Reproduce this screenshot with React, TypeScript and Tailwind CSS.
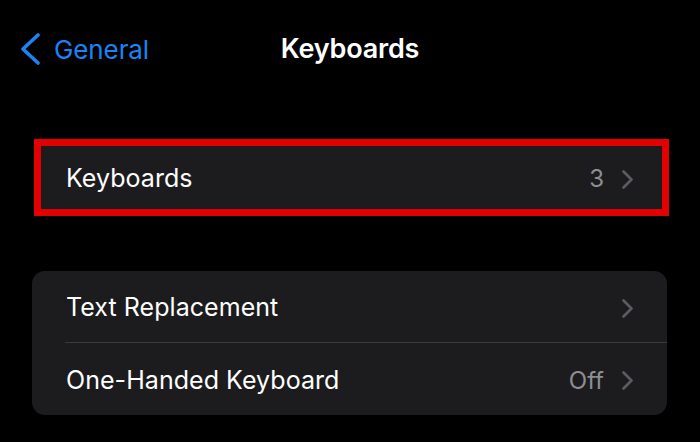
function Chevron() {
	return (
		<svg width="11" height="19" viewBox="0 0 11 19" fill="none" className="shrink-0">
			<path d="M1.5 1.5 L9.5 9.5 L1.5 17.5" stroke="#5b5b60" strokeWidth="2.6" strokeLinecap="round" strokeLinejoin="round" />
		</svg>
	);
}

function Row({ label, value, className }: { label: string; value?: string; className: string }) {
	return (
		<div className={`flex items-center pt-[3px] ${className}`}>
			<span className="flex-1 text-[25px] tracking-[0.05px] text-white">{label}</span>
			{value && <span className="mr-[18px] text-[24px] text-[#8e8e93]">{value}</span>}
			<Chevron />
		</div>
	);
}

export default function App() {
	return (
		<div
			className="h-[442px] w-[700px] overflow-hidden bg-black"
			style={{ fontFamily: 'Inter, "Noto Sans", sans-serif' }}
		>
			{/* Nav bar */}
			<div className="grid h-[98px] grid-cols-[1fr_auto_1fr] items-center">
				<div className="flex items-center pl-[18px] text-[#1a84f7]">
					<svg width="24" height="32" viewBox="0 0 24 32" fill="none" className="mr-[12px]">
						<path d="M20 2 L5 16 L20 30" stroke="#1a84f7" strokeWidth="3.6" strokeLinecap="round" strokeLinejoin="round" />
					</svg>
					<span className="text-[26px] tracking-[-0.1px]">General</span>
				</div>
				<span className="text-[27px] font-semibold tracking-[-0.2px] text-white">Keyboards</span>
				<div />
			</div>

			{/* Keyboards, highlighted */}
			<div className="ml-[34px] mt-[41px] w-[635px] border-[7px] border-[#e20000] bg-[#1c1c1e]">
				<Row label="Keyboards" value="3" className="h-[63px] pl-[25px] pr-[29px]" />
			</div>

			{/* Second group */}
			<div className="ml-[32px] mt-[55px] w-[635px] overflow-hidden rounded-[13px] bg-[#1c1c1e]">
				<Row label="Text Replacement" className="h-[71px] pl-[34px] pr-[34px]" />
				<div className="ml-[33px] h-px bg-[#3a3a3c]" />
				<Row label="One-Handed Keyboard" value="Off" className="h-[72px] pl-[34px] pr-[34px]" />
			</div>
		</div>
	);
}
